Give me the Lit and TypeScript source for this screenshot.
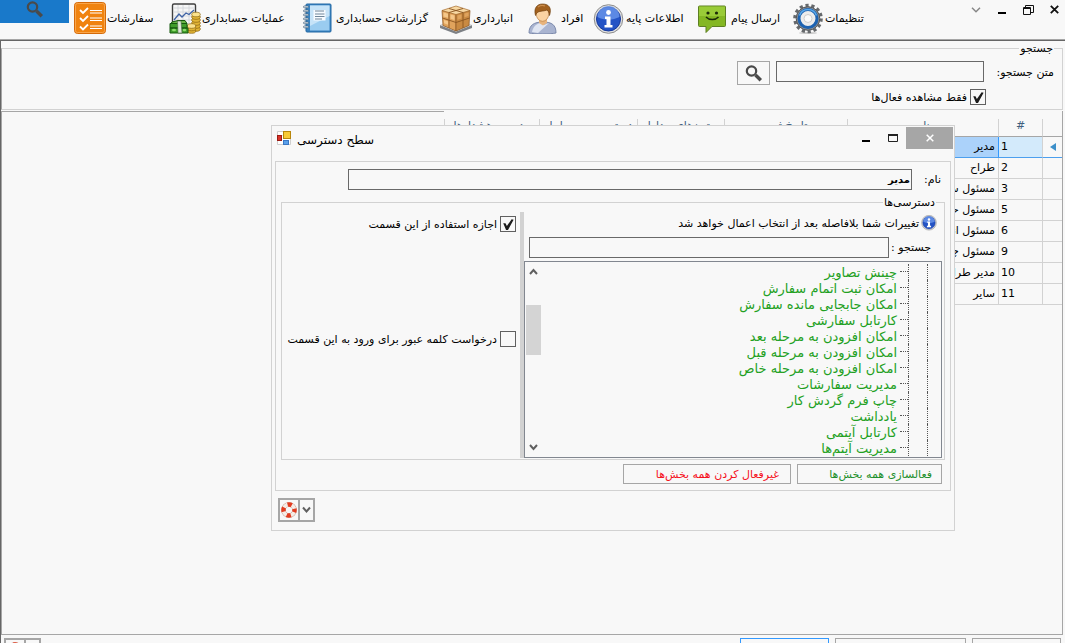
import { LitElement, html, svg, css } from "lit";
import { customElement, state } from "lit/decorators.js";
import { classMap } from "lit/directives/class-map.js";

const magnifier = svg`
  <circle cx="6.500" cy="6" r="4.700" fill="none" stroke="#4a4a4a" stroke-width="2.200"/>
  <path d="M10.500 10l5.300 5.300" stroke="#4a4a4a" stroke-width="3.400"/>`;

const iconOrders = svg`
  <rect x=".5" y=".5" width="31" height="31" rx="3" fill="#f0830f" stroke="#d56a08"/>
  <rect x="1.500" y="1.500" width="29" height="29" rx="2" fill="none" stroke="#f9a54a"/>
  <g fill="none" stroke="#fff" stroke-width="1.800">
    <path d="M6 8l3 3 5-5M6 16l3 3 5-5M6 24.500l3 3 5-5"/>
    <path d="M16 8.500h12M16 11h12M16 16h12M16 18.500h12M16 24h12M16 26.500h12" stroke-width="1.100"/>
  </g>`;

const iconAccounting = svg`
  <rect x="3.500" y="2" width="23" height="22" rx="1.500" fill="#f6f6f6" stroke="#3f3f3f" stroke-width="1.400"/>
  <path d="M4 6h22M4 10h22M4 14h22M4 18h22M9 3v20M14 3v20M20 3v20" stroke="#cfd3d8" stroke-width=".8"/>
  <path d="M5 18l5-6 3 3 4-4 3 1.500 5-4.500" fill="none" stroke="#3f63a5" stroke-width="1.300"/>
  <g stroke="#8a6410" stroke-width=".7" fill="#e2b536">
    <ellipse cx="27" cy="27" rx="4.300" ry="2.300"/><ellipse cx="27" cy="24" rx="4.300" ry="2.300"/>
    <ellipse cx="27" cy="21" rx="4.300" ry="2.300"/><ellipse cx="27" cy="18" rx="4.300" ry="2.300"/>
    <ellipse cx="27" cy="15" rx="4.300" ry="2.300"/><ellipse cx="27" cy="12.500" rx="4.300" ry="2.300" fill="#fbe28c"/>
    <ellipse cx="22.500" cy="29" rx="4.300" ry="2.300"/><ellipse cx="22.500" cy="26.500" rx="4.300" ry="2.300"/>
    <ellipse cx="22.500" cy="24" rx="4.300" ry="2.300" fill="#fbe28c"/>
  </g>
  <path d="M3 20l6-1.500h7l2 3H2z" fill="#69b545" stroke="#15580d"/>
  <path d="M1 21.500h17V26H1zM1 26h18v5H1z" fill="#3f9c2a" stroke="#15580d"/>
  <path d="M8.500 19h3.500l1 12H9z" fill="#dfe8da" stroke="#4d6a45" stroke-width=".6"/>
  <ellipse cx="5" cy="28" rx="2" ry="1.200" fill="#8bdc6a"/><ellipse cx="15.500" cy="28" rx="1.700" ry="1.200" fill="#8bdc6a"/>`;

const iconReports = svg`
  <rect x="3" y="2" width="25" height="28" rx="1" fill="#3a83c0" stroke="#2369a5"/>
  <rect x="7" y="3.500" width="19.500" height="25" fill="#9accf0"/>
  <path d="M7 3.500h19.500V14L7 24z" fill="#c6e3f8"/>
  <rect x="10.500" y="8" width="12" height="10.500" fill="#f7fbff"/>
  <path d="M12 9h9M12 12h9.500M12 14.500h9.500M12 17h7" stroke="#70869a" stroke-width="1"/>
  <g fill="#f4f8fb" stroke="#46647f" stroke-width=".8">
    <rect x=".5" y="4" width="5" height="1.800" rx=".9"/><rect x=".5" y="8" width="5" height="1.800" rx=".9"/>
    <rect x=".5" y="12" width="5" height="1.800" rx=".9"/><rect x=".5" y="16" width="5" height="1.800" rx=".9"/>
    <rect x=".5" y="20" width="5" height="1.800" rx=".9"/><rect x=".5" y="24" width="5" height="1.800" rx=".9"/>
  </g>`;

const iconStock = svg`
  <path d="M0 23l16 6.500L32 23v3l-16 6-16-6z" fill="#7d8186"/>
  <path d="M0 23l16-7 16 7-16 6.500z" fill="#c8cbce"/>
  <path d="M2 8.500l14 3.500v17L3 23.500z" fill="#e0a35c" stroke="#8a5520" stroke-width=".7"/>
  <path d="M30 8.500L16 12v17l13-5.500z" fill="#c98a42" stroke="#8a5520" stroke-width=".7"/>
  <path d="M2 8.500L16 4l14 4.500L16 12.500z" fill="#f7d8a2" stroke="#a56a2c" stroke-width=".7"/>
  <path d="M9 6.500l14 4v15.500M23 6.500l-14 4v15.500M2.500 16L16 20.500 29.500 16" fill="none" stroke="#8a5520" stroke-width=".9"/>
  <path d="M3.500 10.500l4.500 1.200v4L3.500 14.500zM10.500 12.500l4 1v4.500l-4-1.300zM4 18l4 1.300v3.500l-4-1.500z" fill="#f5c88a"/>
  <path d="M17.500 13.500l4-1v4l-4 1.300zM24.500 11.500l4-1v3.500l-4 1.300z" fill="#dfa35d"/>`;

const iconPeople = svg`
  <path d="M1 31c0-8 5-11 14-11s13 3 13 11c-6 1.300-21 1.300-27 0z" fill="#a9b4d0" stroke="#7482a6" stroke-width=".9"/>
  <path d="M4 30c1-5 4-8 8-9l4 2 5-2-11 10z" fill="#dfe5f2"/>
  <path d="M11 16h8v5l-4 2.500-4-2.500z" fill="#e8b47c"/>
  <ellipse cx="14.500" cy="12" rx="6.200" ry="7.300" fill="#fbd3a2" stroke="#b98045" stroke-width=".7"/>
  <path d="M7.500 13.500C5.500 6 9 2 14.500 2 21 2 24 6 21.500 13.500c-.2-3-1-4.500-2.500-5.500-3 1.200-7 1-9 2-1 1-1.900 1.500-2.500 3.500z" fill="#a2611f" stroke="#6f3d0c" stroke-width=".7"/>
  <path d="M10 5c2-1.500 5-1.800 7-1" fill="none" stroke="#cc8f4e" stroke-width="1.200"/>`;

const iconInfo = svg`
  <circle cx="15.500" cy="17" r="14.300" fill="#e0e0e0" stroke="#8d8d8d" stroke-width="1"/>
  <circle cx="15.500" cy="17" r="12" fill="#2453c5" stroke="#16389a"/>
  <path d="M4.500 15a11 11 0 0 1 22 0c-6 3-15 4-22 0z" fill="#6f9bee" opacity=".75"/>
  <circle cx="15.500" cy="10.500" r="2.400" fill="#fff"/>
  <path d="M12 14.500h5.500V23h2v2.500h-8V23h2v-6H12z" fill="#fff"/>`;

const iconMessage = svg`
  <path d="M1.500 4h25q1 0 1 1v18.500q0 1-1 1H14l-6 6v-6H1.500q-1 0-1-1V5q0-1 1-1z" fill="#84b723" stroke="#5d7f22" stroke-width="1"/>
  <path d="M1 4.500h26V14H1z" fill="#a6d944" opacity=".6"/>
  <circle cx="10" cy="11" r="1.600" fill="#1b2a08"/><circle cx="18.500" cy="11" r="1.600" fill="#1b2a08"/>
  <path d="M8 15c3 3.300 9.500 3.300 12.500 0" fill="none" stroke="#1b2a08" stroke-width="1.500"/>`;

const iconSettings = svg`
  <ellipse cx="16" cy="31" rx="9" ry="1" fill="#c9c9c9"/>
  <circle cx="16" cy="16.500" r="13.300" fill="none" stroke="#66696c" stroke-width="3" stroke-dasharray="3.200 2.770"/>
  <circle cx="16" cy="16.500" r="11.800" fill="#8e9194" stroke="#4f5255" stroke-width="1"/>
  <circle cx="16" cy="16.500" r="9" fill="#ececec" stroke="#1d62b0" stroke-width="3"/>
  <path d="M7.500 13.500a9 9 0 0 1 17 0" fill="none" stroke="#5aa9ea" stroke-width="1.600"/>
  <circle cx="16" cy="16.500" r="4" fill="#fafafa" stroke="#cdcdcd"/>`;

const iconRing = svg`
  <circle cx="8" cy="8" r="5.500" fill="none" stroke="#b98a7c" stroke-width="4.600"/>
  <circle cx="8" cy="8" r="5.500" fill="none" stroke="#f6ece6" stroke-width="3.800"/>
  <circle cx="8" cy="8" r="5.500" fill="none" stroke="#e23c20" stroke-width="4.400" stroke-dasharray="4.320 4.320" stroke-dashoffset="2.160"/>`;

const TOOLS = [
  { label: "سفارشات", icon: iconOrders },
  { label: "عملیات حسابداری", icon: iconAccounting },
  { label: "گزارشات حسابداری", icon: iconReports },
  { label: "انبارداری", icon: iconStock },
  { label: "افراد", icon: iconPeople },
  { label: "اطلاعات پایه", icon: iconInfo },
  { label: "ارسال پیام", icon: iconMessage },
  { label: "تنظیمات", icon: iconSettings },
];

const HEADERS = ["", "#", "نام", "تاریخ ثبت", "ستون‌های جداول", "دسترسی به مراحل", "مدیریت هشدارها"];

const ROWS: [number, string][] = [
  [1, "مدیر"],
  [2, "طراح"],
  [3, "مسئول سفارش"],
  [5, "مسئول حسابداری"],
  [6, "مسئول انبار"],
  [9, "مسئول چاپ"],
  [10, "مدیر طراحی"],
  [11, "سایر"],
];

const NODES = [
  "چینش تصاویر",
  "امکان ثبت اتمام سفارش",
  "امکان جابجایی مانده سفارش",
  "کارتابل سفارشی",
  "امکان افزودن به مرحله بعد",
  "امکان افزودن به مرحله قبل",
  "امکان افزودن به مرحله خاص",
  "مدیریت سفارشات",
  "چاپ فرم گردش کار",
  "یادداشت",
  "کارتابل آیتمی",
  "مدیریت آیتم‌ها",
];

const base = css`
  * { box-sizing: border-box; }
  :host {
    font-family: "DejaVu Sans", sans-serif;
    font-size: 11px;
    line-height: 15px;
    color: #000;
  }
  svg { display: block; flex: none; }
  button, input { font: inherit; color: inherit; margin: 0; padding: 0; border-radius: 0; }
  button { background: none; border: none; }
  .text { border: 1px solid #696969; background: #f8f8f8; height: 21px; padding: 0 1px; outline: none; min-width: 0; }
  .check { display: flex; align-items: center; gap: 3px; white-space: nowrap; }
  .check input {
    appearance: none; width: 16px; height: 16px; flex: none;
    border: 1px solid #606060; background: #f8f8f8; display: block;
  }
  .check input:checked::before {
    content: ""; display: block; width: 14px; height: 14px; background: #1c1c1c;
    clip-path: polygon(16% 45%, 32% 45%, 42% 64%, 76% 16%, 90% 20%, 50% 92%, 36% 92%);
  }
  fieldset { margin: 0; border: 1px solid #d2d2d2; min-width: 0; }
  legend { padding: 0 1px; line-height: 15px; }
`;

@customElement("help-button")
class HelpButton extends LitElement {
  static styles = [base, css`
    :host { display: flex; }
    .split { display: flex; direction: ltr; border: 2px solid #a6a6a6; width: 37px; height: 24px; }
    .main { width: 20px; border-right: 2px solid #a6a6a6; display: grid; place-items: center; }
    .more { flex: 1; display: grid; place-items: center; }
  `];
  render() {
    return html`<div class="split">
      <button class="main" aria-label="راهنما"><svg width="16" height="16" viewBox="0 0 16 16">${iconRing}</svg></button>
      <button class="more" aria-label="بیشتر"><svg width="9" height="8" viewBox="0 0 9 8"><path d="M1 1.500l3.500 4 3.500-4" fill="none" stroke="#606060" stroke-width="2"/></svg></button>
    </div>`;
  }
}

@customElement("access-dialog")
class AccessDialog extends LitElement {
  @state() private allowed = true;

  static styles = [base, css`
    :host { display: block; direction: rtl; background: #f8f8f8; border: 1px solid #d2d2d2; }
    .title { display: flex; direction: ltr; height: 35px; padding: 1px 1px 0 5px; }
    .caption { flex: 1; display: flex; gap: 6px; font-size: 12px; line-height: 16px; padding-top: 4px; }
    .caption span { padding-top: 1px; }
    .win { height: 22px; width: 27px; display: grid; place-items: center; }
    .close { width: 47px; background: #a6a6a6; }
    .panel { margin: 0 3px; border: 1px solid #d2d2d2; padding: 7px 5px 6px; }
    .name { display: flex; align-items: center; padding-right: 4px; margin-bottom: 5px; }
    .name label { width: 29px; }
    .name .text { flex: 1; margin-left: 67px; font-size: 10px; font-weight: bold; }
    .rights { padding: 0 2px 1px 0; display: block; }
    .rights legend { margin-right: 6px; }
    .body { display: grid; grid-template-columns: 418px 4px 1fr; }
    .bar { background: #d2d2d2; margin-top: 2px; }
    .tip { display: flex; align-items: center; gap: 2px; padding: 5px 5px 0 0; height: 21px; }
    .find { display: flex; align-items: center; margin: 6px 0 3px; padding: 0 11px 0 5px; }
    .find label { width: 42px; }
    .find .text { flex: 1; }
    .tree { display: flex; height: 197px; border: 1px solid #828790; }
    .nodes { list-style: none; margin: 0; padding: 2px 0 0; flex: 1; color: #22a022; font-size: 13px; line-height: 18px; overflow: hidden; }
    .nodes li { display: flex; height: 16px; white-space: nowrap; }
    .rail { width: 14px; border-left: 1px dotted #555; }
    .rail.inner { width: 19px; }
    .tick { width: 8px; height: 8px; border-bottom: 1px dotted #555; margin-left: 3px; }
    .scroll { width: 17px; display: flex; flex-direction: column; align-items: center; padding: 2px 0; }
    .scroll button { height: 16px; display: grid; place-items: center; }
    .track { flex: 1; width: 15px; padding-top: 25px; }
    .thumb { height: 50px; background: #d4d4d4; }
    .options { padding: 6px 4px 0 8px; display: grid; gap: 99px; align-content: start; }
    .actions { display: flex; gap: 6px; margin-top: 4px; padding-right: 3px; }
    .act { border: 1px solid #a6a6a6; height: 20px; width: 145px; text-align: right; padding: 0 9px; color: #1d8f2b; }
    .act.off { width: 168px; padding: 0 11px; color: #f5101c; }
    .foot { direction: ltr; padding: 7px 6px 8px; }
  `];

  render() {
    return html`
      <header class="title">
        <div class="caption">
          <svg width="14" height="14" viewBox="0 0 14 14">
            <path d="M.5.500h13v13H.5zM.5 4.500h5" fill="#fff" stroke="#cfcfcf"/>
            <rect x=".5" y="4.500" width="4" height="5" fill="#d8342a" stroke="#9c1a12"/>
            <rect x="6.500" y=".5" width="7" height="7" fill="#f7c935" stroke="#b8860b"/>
            <rect x="6.500" y="9.500" width="5" height="4" fill="#5aa0ea" stroke="#3a78c4"/>
          </svg>
          <span>سطح دسترسی</span>
        </div>
        <button class="win" aria-label="کوچک"><svg width="10" height="10" viewBox="0 0 10 10"><path d="M1 8h8" stroke="#000" stroke-width="2"/></svg></button>
        <button class="win" aria-label="بزرگ"><svg width="10" height="8" viewBox="0 0 10 8"><path d="M.5 1h9v6.500h-9z" fill="none" stroke="#222"/><path d="M0 1h10" stroke="#222" stroke-width="2"/></svg></button>
        <button class="win close" aria-label="بستن"><svg width="8" height="8" viewBox="0 0 8 8"><path d="M.7.700l6.600 6.600M7.300.700L.7 7.300" stroke="#fff" stroke-width="1.500"/></svg></button>
      </header>
      <section class="panel">
        <div class="name">
          <label for="name">نام:</label>
          <input class="text" id="name" type="text" value="مدیر" />
        </div>
        <fieldset class="rights">
          <legend>دسترسی‌ها</legend>
          <div class="body">
            <div>
              <div class="tip">
                <svg width="16" height="16" viewBox="0 2 31 31">${iconInfo}</svg>
                <span>تغییرات شما بلافاصله بعد از انتخاب اعمال خواهد شد</span>
              </div>
              <div class="find">
                <label for="find">جستجو :</label>
                <input class="text" id="find" type="text" />
              </div>
              <div class="tree">
                <ul class="nodes">
                  ${NODES.map((n) => html`<li><span class="rail"></span><span class="rail inner"></span><span class="tick"></span>${n}</li>`)}
                </ul>
                <div class="scroll">
                  <button aria-label="بالا"><svg width="9" height="8" viewBox="0 0 9 8"><path d="M1 6l3.500-4L8 6" fill="none" stroke="#606060" stroke-width="2"/></svg></button>
                  <div class="track"><div class="thumb"></div></div>
                  <button aria-label="پایین"><svg width="9" height="8" viewBox="0 0 9 8"><path d="M1 2l3.500 4L8 2" fill="none" stroke="#606060" stroke-width="2"/></svg></button>
                </div>
              </div>
            </div>
            <div class="bar"></div>
            <div class="options">
              <label class="check"><input type="checkbox" .checked=${this.allowed} @change=${() => (this.allowed = !this.allowed)} />اجازه استفاده از این قسمت</label>
              <label class="check"><input type="checkbox" />درخواست کلمه عبور برای ورود به این قسمت</label>
            </div>
          </div>
        </fieldset>
        <div class="actions">
          <button class="act">فعالسازی همه بخش‌ها</button>
          <button class="act off">غیرفعال کردن همه بخش‌ها</button>
        </div>
      </section>
      <footer class="foot"><help-button></help-button></footer>
    `;
  }
}

@customElement("app-root")
class AppRoot extends LitElement {
  @state() private selected = 1;

  static styles = [base, css`
    :host {
      display: grid; grid-template-rows: auto auto 1fr 8px; height: 100vh;
      position: relative; overflow: hidden; background: #f8f8f8; direction: rtl;
    }
    .bar { direction: ltr; display: flex; height: 41px; border-bottom: 1px solid #666; box-shadow: inset 0 -1px #a6a6a6; }
    .quick { width: 69px; height: 23px; padding-bottom: 4px; background: #1979ca; display: grid; place-items: center; overflow: hidden; }
    .tools { display: grid; grid-template-columns: 95px 134px 137px 88px 65px 105px 94px auto; padding-left: 5px; flex: 1; justify-content: start; }
    .tool { display: flex; align-items: center; gap: 1px; height: 36px; white-space: nowrap; }
    .wins { display: flex; gap: 4px; }
    .win { width: 22px; height: 19px; display: grid; place-items: center; }
    .search { margin: 0 2px 0 0; border-left-color: #a6a6a6; padding: 5px 8px 4px; }
    .line { display: flex; align-items: start; gap: 6px; margin-bottom: 4px; }
    .line label { width: 64px; padding-top: 4px; }
    .line .text { width: 208px; }
    .go { width: 33px; height: 24px; border: 1px solid #a6a6a6; display: grid; place-items: center; }
    .search .check { width: max-content; margin-right: 68px; }
    .edge { border-left: 1px solid #666; }
    .content { display: grid; }
    .frame { margin: 1px 2px 0 0; border: 1px solid #a6a6a6; }
    .grid { width: max-content; margin-top: -1px; padding-top: 8px; background: #f8f8f8; }
    table { table-layout: fixed; width: 618px; border-collapse: separate; border-spacing: 0; }
    col.c0 { width: 20px; } col.c1 { width: 44px; } col.c2 { width: 151px; } col.c3 { width: 123px; }
    col.c4 { width: 87px; } col.c5 { width: 98px; } col.c6 { width: 95px; }
    th, td { padding: 0 3px; border-left: 1px solid #d2d2d2; white-space: nowrap; overflow: hidden; font-weight: normal; }
    th { height: 18px; line-height: 13px; vertical-align: top; color: #3f5f7f; border-bottom: 1px solid #a6a6a6; }
    td { height: 21px; line-height: 20px; border-bottom: 1px solid #d2d2d2; }
    td.num { direction: ltr; text-align: left; padding: 0 2px; }
    .mark svg { margin: 0 auto; }
    .on td { border-bottom-color: #4c9fee; }
    .on .num { background: #d3eafb; border-left-color: #3399ff; }
    .on .who { background: #abd2fa; }
    .below { display: flex; gap: 6px; padding: 3px 4px 0 3px; overflow: hidden; }
    .cmd { flex: none; height: 24px; width: 89px; border: 1px solid #a6a6a6; }
    .cmd.wide { width: 131px; }
    .cmd.main { border-color: #3399ff; margin-left: auto; }
    access-dialog { position: absolute; left: 271px; top: 125px; width: 684px; }
  `];

  render() {
    return html`
      <header class="bar">
        <button class="quick" aria-label="جستجو"><svg width="17" height="17" viewBox="0 0 17 17">${magnifier}</svg></button>
        <nav class="tools">
          ${TOOLS.map((t) => html`<button class="tool"><svg width="32" height="32" viewBox="0 0 32 32">${t.icon}</svg>${t.label}</button>`)}
        </nav>
        <div class="wins">
          <button class="win" aria-label="منو"><svg width="10" height="6" viewBox="0 0 10 6"><path d="M1 .8l4 4 4-4" fill="none" stroke="#888" stroke-width="1.500"/></svg></button>
          <button class="win" aria-label="کوچک"><svg width="8" height="10" viewBox="0 0 8 10"><path d="M0 8h8" stroke="#000" stroke-width="2"/></svg></button>
          <button class="win" aria-label="بازگردانی"><svg width="11" height="10" viewBox="0 0 11 10"><path d="M.5 2.500h7v7h-7zM2.500 2.500v-2h8v7h-3M.5 3.500h7" fill="none" stroke="#111"/></svg></button>
          <button class="win" aria-label="بستن"><svg width="9" height="9" viewBox="0 0 9 9"><path d="M.8.800l7.400 7.400M8.200.800L.8 8.200" stroke="#111" stroke-width="1.800"/></svg></button>
        </div>
      </header>
      <div class="edge">
        <fieldset class="search">
          <legend>جستجو</legend>
          <div class="line">
            <label for="q">متن جستجو:</label>
            <input class="text" id="q" type="text" />
            <button class="go" aria-label="جستجو"><svg width="17" height="17" viewBox="0 0 17 17">${magnifier}</svg></button>
          </div>
          <label class="check"><input type="checkbox" checked />فقط مشاهده فعال‌ها</label>
        </fieldset>
      </div>
      <main class="edge content">
        <div class="frame">
          <div class="grid">
            <table>
              <colgroup>${HEADERS.map((_, i) => html`<col class="c${i}" />`)}</colgroup>
              <thead><tr>${HEADERS.map((h) => html`<th>${h}</th>`)}</tr></thead>
              <tbody>
                ${ROWS.map(([id, name]) => html`
                  <tr class=${classMap({ on: id === this.selected })} @click=${() => (this.selected = id)}>
                    <td class="mark">${id === this.selected ? html`<svg width="8" height="8" viewBox="0 0 8 8"><path d="M7 0v8L1 4z" fill="#3d8fc9"/></svg>` : ""}</td>
                    <td class="num">${id}</td>
                    <td class="who">${name}</td>
                    <td></td><td></td><td></td><td></td>
                  </tr>`)}
              </tbody>
            </table>
          </div>
        </div>
      </main>
      <footer class="below edge">
        <button class="cmd" aria-label="بستن"></button>
        <button class="cmd wide" aria-label="ویرایش"></button>
        <button class="cmd main" aria-label="جدید"></button>
        <help-button></help-button>
      </footer>
      <access-dialog></access-dialog>
    `;
  }
}
